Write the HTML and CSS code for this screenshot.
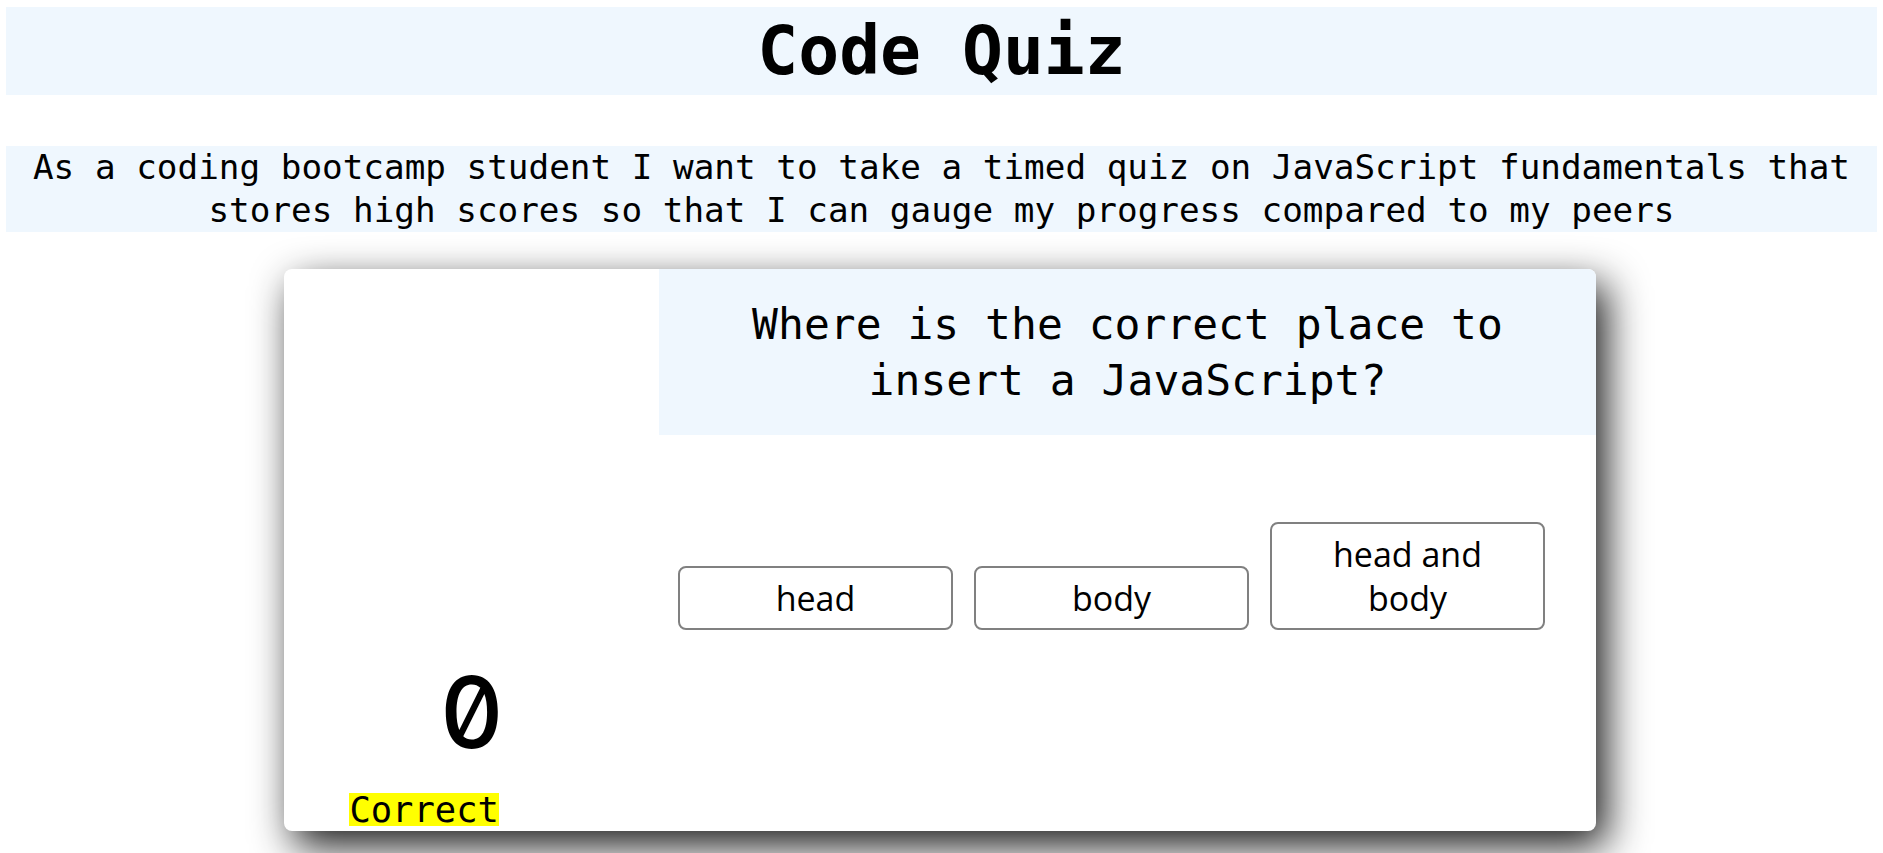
FILE: index.html
```html
<!DOCTYPE html>
<html lang="en">
<head>
<meta charset="utf-8">
<title>Code Quiz</title>
<link rel="stylesheet" href="styles.css">
</head>
<body>
  <header class="banner">
    <h1 class="title">Code Quiz</h1>
  </header>
  <p class="intro">As a coding bootcamp student I want to take a timed quiz on JavaScript fundamentals that stores high scores so that I can gauge my progress compared to my peers</p>
  <main class="card">
    <section class="side">
      <div class="score">0</div>
      <span class="feedback">Correct</span>
    </section>
    <section class="quiz">
      <h2 class="question">Where is the correct place to insert a JavaScript?</h2>
      <div class="answers">
        <button class="answer">head</button>
        <button class="answer">body</button>
        <button class="answer">head and body</button>
      </div>
    </section>
  </main>
</body>
</html>
```

FILE: styles.css
```css
html {
  margin: 0;
  background: #ffffff;
  overflow: hidden;
}

body {
  margin: 0;
  min-height: 853px;
  box-sizing: border-box;
  padding: 7px 6px 0;
  font-family: "DejaVu Sans Mono", "Liberation Mono", monospace;
  color: #000;
}

.banner {
  background: #eff7fe;
  height: 88px;
}

.title {
  margin: 0;
  font-size: 68px;
  line-height: 88px;
  font-weight: bold;
  text-align: center;
}

.intro {
  margin: 51px 0 0;
  background: #eff7fe;
  font-size: 34.3px;
  line-height: 43px;
  text-align: center;
}

.card {
  width: 1312px;
  height: 562px;
  margin: 37px 0 0 278px;
  background: #fff;
  border-radius: 8px;
  box-shadow: 10px 15px 40px rgba(0, 0, 0, 0.9);
  display: flex;
  overflow: hidden;
}

.side {
  width: 375px;
  flex: none;
  box-sizing: border-box;
  padding: 0 160px 5px 0;
  display: flex;
  flex-direction: column;
  justify-content: flex-end;
  align-items: flex-end;
}

.score {
  font-family: "Inter", sans-serif;
  font-feature-settings: "zero" 1, "tnum" 1;
  font-weight: 500;
  font-size: 99px;
  line-height: 100px;
  margin: 0 -5px 31px 0;
}

.feedback {
  display: inline-block;
  background: #ffff00;
  font-size: 35.5px;
  line-height: 33px;
  height: 33px;
}

.quiz {
  flex: 1;
  display: flex;
  flex-direction: column;
}

.question {
  margin: 0;
  height: 166px;
  box-sizing: border-box;
  padding: 27px 40px;
  background: #eff7fe;
  font-size: 43px;
  line-height: 56px;
  font-weight: normal;
  text-align: center;
}

.answers {
  display: flex;
  align-items: flex-end;
  gap: 21px;
  padding: 0 0 0 19px;
  height: 195px;
}

.answer {
  width: 275px;
  box-sizing: border-box;
  padding: 8px 20px;
  border: 2px solid #808080;
  border-radius: 8px;
  background: #fff;
  color: #000;
  font-family: "Open Sans", "Noto Sans", sans-serif;
  font-size: 34px;
  line-height: 44px;
}
```
